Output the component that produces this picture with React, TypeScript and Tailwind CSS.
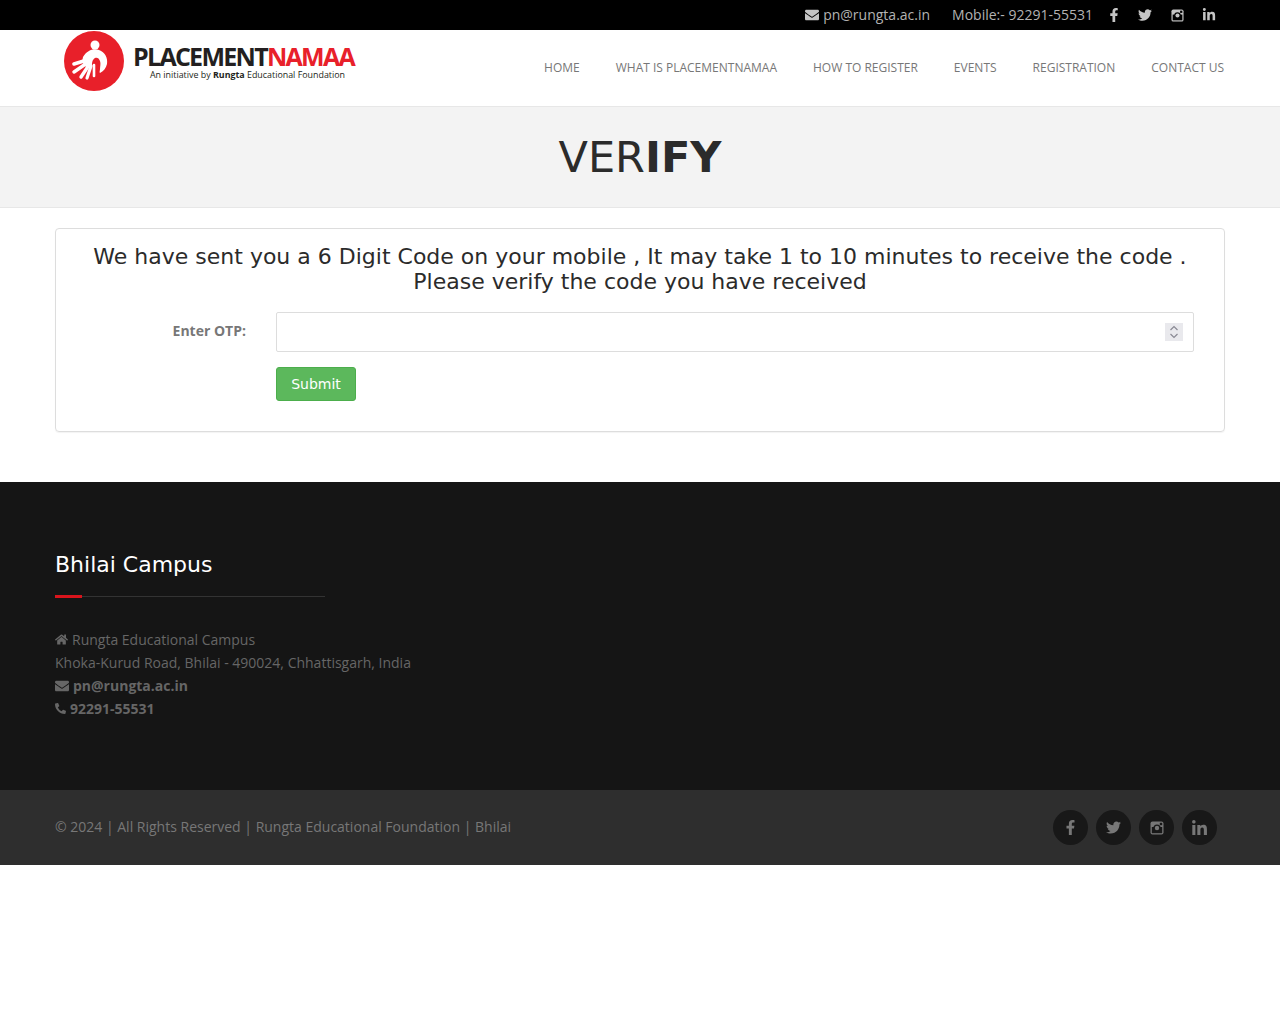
import React from "react";
import { FaEnvelope, FaFacebookF, FaTwitter, FaLinkedinIn, FaHome, FaPhoneAlt } from "react-icons/fa";

const sans = "font-['Open_Sans',sans-serif]";
const dejavu = "font-['DejaVu_Sans',sans-serif]";

function Insta({ size = 13 }: { size?: number }) {
  return (
    <svg width={size} height={size} viewBox="0 0 14 14" fill="none">
      <rect x="0.5" y="0.5" width="13" height="13" rx="2" fill="currentColor" />
      <rect x="1.8" y="6" width="10.4" height="6.2" fill="var(--ib)" />
      <circle cx="7" cy="7" r="3.6" fill="var(--ib)" />
      <circle cx="7" cy="7" r="2.2" fill="currentColor" />
      <rect x="9.8" y="1.8" width="2.4" height="2.4" fill="var(--ib)" />
    </svg>
  );
}

function Logo() {
  return (
    <div className="flex items-start">
      <svg width="62" height="60" viewBox="0 0 62 60" className="mt-[1px] shrink-0">
        <circle cx="31" cy="30" r="30" fill="#e8202a" />
        <circle cx="32" cy="14" r="4.5" fill="#fff" />
        <path d="M20 26c4-7 11-9 16-7 6 2 9 8 8 14-1 4-3 7-7 9-1-1 0-2 0-4 0-3 1-5 0-8-1-3-3-4-5-3-3 2-3 5-3 8l-6 1-4-5z" fill="#fff" />
        <g stroke="#fff" strokeLinecap="round" fill="none">
          <path d="M24 29 11 33" strokeWidth="3.6" />
          <path d="M24 32 11 41" strokeWidth="3.4" />
          <path d="M26 34 18 46" strokeWidth="3.4" />
          <path d="M28 35 24 47" strokeWidth="3.2" />
          <path d="M31 34 31 45" strokeWidth="2.6" />
        </g>
      </svg>
      <div className="ml-[8px] mt-[13px] flex flex-col items-start">
        <div className={`${sans} text-[25px] leading-[26px] font-bold tracking-[-1.72px] text-[#231f20]`}>
          PLACEMENT<span className="text-[#e8202a]">NAMAA</span>
        </div>
        <div className={`${sans} ml-[17px] mt-[1px] text-[8.9px] leading-[10px] text-[#231f20] font-normal whitespace-nowrap`}>
          An initiative by <b>Rungta</b> Educational Foundation
        </div>
      </div>
    </div>
  );
}

export default function App() {
  const nav = ["HOME", "WHAT IS PLACEMENTNAMAA", "HOW TO REGISTER", "EVENTS", "REGISTRATION", "CONTACT US"];
  return (
    <div className={`${sans} min-h-[1024px] bg-white`}>
      <div className="h-[30px] bg-black flex items-center justify-end pr-[64px] text-[14px] text-[#b3b3b3] [--ib:#000]">
        <FaEnvelope className="text-[14px] mr-[4px] text-[#c4c4c4]" />
        <span className="mb-[2px]">pn@rungta.ac.in</span>
        <span className="ml-[22px] mb-[2px]">Mobile:- 92291-55531</span>
        <FaFacebookF className="ml-[14px] text-[14px] text-[#c4c4c4]" />
        <FaTwitter className="ml-[17px] text-[14px] text-[#c4c4c4]" />
        <span className="ml-[19px] text-[#c4c4c4]"><Insta /></span>
        <FaLinkedinIn className="ml-[18px] text-[14px] text-[#c4c4c4]" />
      </div>

      <header className="h-[77px] border-b border-[#e7e7e7] flex items-start justify-between pl-[63px] pr-[56px]">
        <Logo />
        <nav className="flex gap-[36px] pt-[29px] text-[12px] leading-[18px] text-[#777]">
          {nav.map((n) => (
            <span key={n}>{n}</span>
          ))}
        </nav>
      </header>

      <div className="h-[101px] bg-[#f3f3f3] border-b border-[#e7e7e7] flex items-center justify-center">
        <h1 className={`${dejavu} text-[43px] leading-[46px] text-[#2b2b2b] font-normal`}>
          VER<b>IFY</b>
        </h1>
      </div>

      <main className="mx-[55px] mt-[20px] mb-[50px] h-[204px] border border-[#ddd] rounded-[4px] shadow-[0_1px_1px_rgba(0,0,0,0.05)] pt-[15px] px-[20px]">
        <p className={`${dejavu} text-[22px] leading-[25px] text-[#2b2b2b] text-center`}>
          We have sent you a 6 Digit Code on your mobile , It may take 1 to 10 minutes to receive the code .
          <br />
          Please verify the code you have received
        </p>
        <div className="flex mt-[18px]">
          <label className={`${sans} w-[170px] shrink-0 pt-[9px] text-right text-[14px] leading-[20px] font-bold text-[#777]`}>
            Enter OTP:
          </label>
          <div className="relative ml-[30px] w-[918px] h-[40px] border border-[#ddd] rounded-[2px] bg-white">
            <div className="absolute right-[10px] top-[10px] w-[18px] h-[18px] bg-[#e9e9ed] flex flex-col items-center justify-center">
              <svg width="10" height="14" viewBox="0 0 10 14" fill="none" stroke="#8a8a94" strokeWidth="1.2">
                <path d="M1.5 5 5 1.5 8.5 5" />
                <path d="M1.5 9 5 12.5 8.5 9" />
              </svg>
            </div>
          </div>
        </div>
        <div className="ml-[200px] mt-[15px]">
          <button className={`${dejavu} w-[80px] h-[34px] rounded-[3px] border border-[#4cae4c] bg-[#5cb85c] text-white text-[14px]`}>
            Submit
          </button>
        </div>
      </main>

      <footer className="h-[308px] bg-[#151515] px-[55px] pt-[69px]">
        <h3 className={`${dejavu} text-[22px] leading-[28px] font-normal text-white`}>Bhilai Campus</h3>
        <div className="relative mt-[17px] w-[270px] h-[1px] bg-[#333]">
          <div className="absolute left-0 -top-[1px] w-[27px] h-[3px] bg-[#d9141c]" />
        </div>
        <div className="mt-[31px] text-[14px] leading-[23px] text-[#666]">
          <div className="flex items-center">
            <FaHome className="mr-[4px] text-[13px]" />
            Rungta Educational Campus
          </div>
          <div>Khoka-Kurud Road, Bhilai - 490024, Chhattisgarh, India</div>
          <div className="flex items-center font-bold">
            <FaEnvelope className="mr-[4px] text-[14px]" />
            pn@rungta.ac.in
          </div>
          <div className="flex items-center font-bold">
            <FaPhoneAlt className="mr-[4px] text-[11px]" />
            92291-55531
          </div>
        </div>
      </footer>

      <div className="h-[75px] bg-[#2e2e2e] flex items-center justify-between pl-[55px] pr-[63px] text-[14px] text-[#777] [--ib:#181818]">
        <span className="mb-[2px]">© 2024 | All Rights Reserved | Rungta Educational Foundation | Bhilai</span>
        <div className="flex gap-[8px]">
          {[<FaFacebookF key="f" />, <FaTwitter key="t" />, <Insta key="i" size={14} />, <FaLinkedinIn key="l" className="text-[17px] mt-[2px]" />].map((ic, i) => (
            <div key={i} className="w-[35px] h-[35px] rounded-full bg-[#181818] flex items-center justify-center text-[15px] text-[#777]">
              {ic}
            </div>
          ))}
        </div>
      </div>
    </div>
  );
}
